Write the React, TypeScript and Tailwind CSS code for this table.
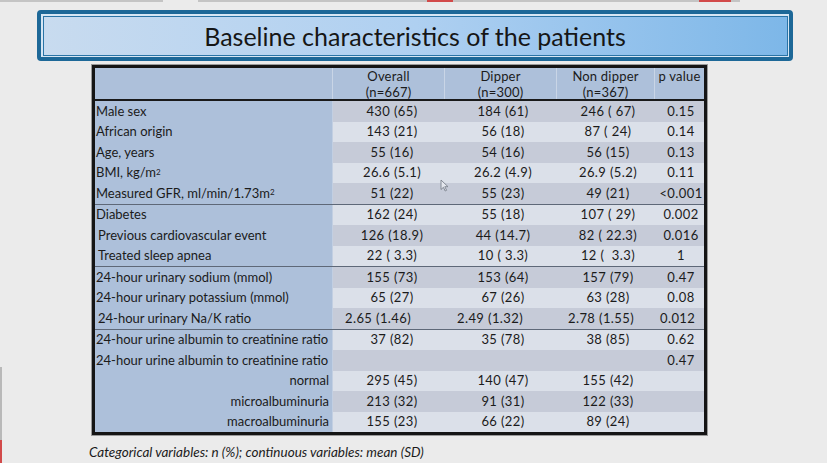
import React from "react";

type Row = {
  label: React.ReactNode;
  v: string[];
  group?: boolean;
  indent?: boolean;
  right?: boolean;
  left?: boolean;
};

const rows: Row[] = [
  { label: "Male sex", v: ["430 (65)", "184 (61)", "246 ( 67)", "0.15"] },
  { label: "African origin", v: ["143 (21)", "56 (18)", "87 ( 24)", "0.14"] },
  { label: "Age, years", v: ["55 (16)", "54 (16)", "56 (15)", "0.13"] },
  {
    label: (
      <>
        BMI, kg/m<sup className="text-[8px] relative top-[-1px]">2</sup>
      </>
    ),
    v: ["26.6 (5.1)", "26.2 (4.9)", "26.9 (5.2)", "0.11"],
  },
  {
    label: (
      <>
        Measured GFR, ml/min/1.73m<sup className="text-[8px] relative top-[-1px]">2</sup>
      </>
    ),
    v: ["51 (22)", "55 (23)", "49 (21)", "<0.001"],
  },
  { label: "Diabetes", group: true, v: ["162 (24)", "55 (18)", "107 ( 29)", "0.002"] },
  { label: "Previous cardiovascular event", indent: true, v: ["126 (18.9)", "44 (14.7)", "82 ( 22.3)", "0.016"] },
  { label: "Treated sleep apnea", indent: true, v: ["22 ( 3.3)", "10 ( 3.3)", "12 (  3.3)", "1"] },
  { label: "24-hour urinary sodium (mmol)", group: true, v: ["155 (73)", "153 (64)", "157 (79)", "0.47"] },
  { label: "24-hour urinary potassium (mmol)", v: ["65 (27)", "67 (26)", "63 (28)", "0.08"] },
  { label: "24-hour urinary Na/K ratio", indent: true, left: true, v: ["2.65 (1.46)", "2.49 (1.32)", "2.78 (1.55)", "0.012"] },
  { label: "24-hour urine albumin to creatinine ratio", group: true, v: ["37 (82)", "35 (78)", "38 (85)", "0.62"] },
  { label: "24-hour urine albumin to creatinine ratio", v: ["", "", "", "0.47"] },
  { label: "normal", right: true, v: ["295 (45)", "140 (47)", "155 (42)", ""] },
  { label: "microalbuminuria", right: true, v: ["213 (32)", "91 (31)", "122 (33)", ""] },
  { label: "macroalbuminuria", right: true, v: ["155 (23)", "66 (22)", "89 (24)", ""] },
];

const colW = ["w-[112px]", "w-[112px]", "w-[98px]", "w-[49px]"];
const colPadCenter = ["pl-[6px]", "pl-[4px]", "pl-[4px]", "pl-[3px]"];
const colPadLeft = ["pl-[12px]", "pl-[12px]", "pl-[11px]", "pl-[5px]"];

export default function App() {
  return (
    <div
      className="relative w-[827px] h-[463px] overflow-hidden bg-[#ebebeb] text-[#1b1b1b]"
      style={{ fontFamily: "Lato, 'Open Sans', sans-serif" }}
    >
      {/* top edge strip */}
      <div className="flex h-[2px]">
        <div className="w-[163px] bg-[#c4c4c4]" />
        <div className="w-[35px]" />
        <div className="w-[229px] bg-[#c4c4c4]" />
        <div className="w-[26px] bg-[#d24a4a]" />
        <div className="w-[246px] bg-[#c4c4c4]" />
        <div className="w-[32px] bg-[#d24a4a]" />
        <div className="w-[9px] bg-[#c4c4c4]" />
      </div>
      {/* left edge strip */}
      <div className="absolute left-0 top-[367px] w-[2px] h-[73px] bg-[#b9b9b9]" />
      <div className="absolute left-0 top-[440px] w-[2px] h-[23px] bg-[#d24a4a]" />

      {/* title */}
      <div className="ml-[37px] mt-[8px] w-[756px] h-[51px] rounded-[4px] border-[4px] border-[#1d6898] bg-[#d6e6f4] p-[1.5px]">
        <div className="h-full w-full border border-[#2a74a6] bg-gradient-to-r from-[#c8dbef] via-[#afd0f1] to-[#7db7e8] flex items-center justify-center">
          <span className="text-[25px] leading-none text-[#161616] relative top-[1px]">
            Baseline characteristics of the patients
          </span>
        </div>
      </div>

      {/* table */}
      <div className="ml-[92px] mt-[4px] w-[615px] border-[3px] border-[#151515] shadow-[0_0_0_1px_#9a9a9a] text-[13px] leading-none">
        {/* header */}
        <div className="flex h-[33px] bg-[#adc0da] border-b-2 border-[#1a1a1a]">
          <div className="w-[238px] border-r border-[#c9d5e6]" />
          {["Overall|(n=667)", "Dipper|(n=300)", "Non dipper|(n=367)", "p value|"].map((h, i) => {
            const [a, b] = h.split("|");
            return (
              <div
                key={i}
                className={`${colW[i]} ${i < 3 ? "border-r border-[#c9d5e6]" : ""} flex flex-col items-center pt-0 leading-[16px] tracking-[0.2px]`}
              >
                <span>{a}</span>
                <span>{b}</span>
              </div>
            );
          })}
        </div>
        {/* body */}
        {rows.map((r, idx) => {
          const dark = idx % 2 === 0;
          return (
            <div
              key={idx}
              className={`flex ${r.group ? "h-[21.5px] border-t border-[#5e6878]" : "h-[20.5px]"}`}
            >
              <div
                className={`w-[238px] bg-[#adc0da] border-r border-[#c2cfe2] flex items-center whitespace-nowrap ${
                  r.right ? "justify-end pr-[3px]" : r.indent ? "pl-[3px]" : "pl-[1px]"
                }`}
              >
                {r.label}
              </div>
              {r.v.map((val, i) => (
                <div
                  key={i}
                  className={`${colW[i]} ${dark ? "bg-[#c6cbd8]" : "bg-[#dbe0e9]"} flex items-center whitespace-pre tracking-[0.4px] ${
                    r.left ? `justify-start ${colPadLeft[i]}` : `justify-center ${colPadCenter[i]}`
                  }`}
                >
                  {val}
                </div>
              ))}
            </div>
          );
        })}
      </div>

      {/* caption */}
      <div className="ml-[89px] mt-[11px] text-[13.5px] italic leading-none text-[#1b1b1b]">
        Categorical variables: n (%); continuous variables: mean (SD)
      </div>

      {/* mouse pointer */}
      <svg className="absolute left-[440px] top-[179px]" width="9" height="13" viewBox="0 0 9 13">
        <path
          d="M1 1 L1 10.5 L3.4 8.3 L5.2 12 L6.6 11.3 L4.8 7.7 L8 7.7 Z"
          fill="#e4e7ee"
          stroke="#7b818c"
          strokeWidth="0.9"
          strokeLinejoin="round"
        />
      </svg>
    </div>
  );
}
